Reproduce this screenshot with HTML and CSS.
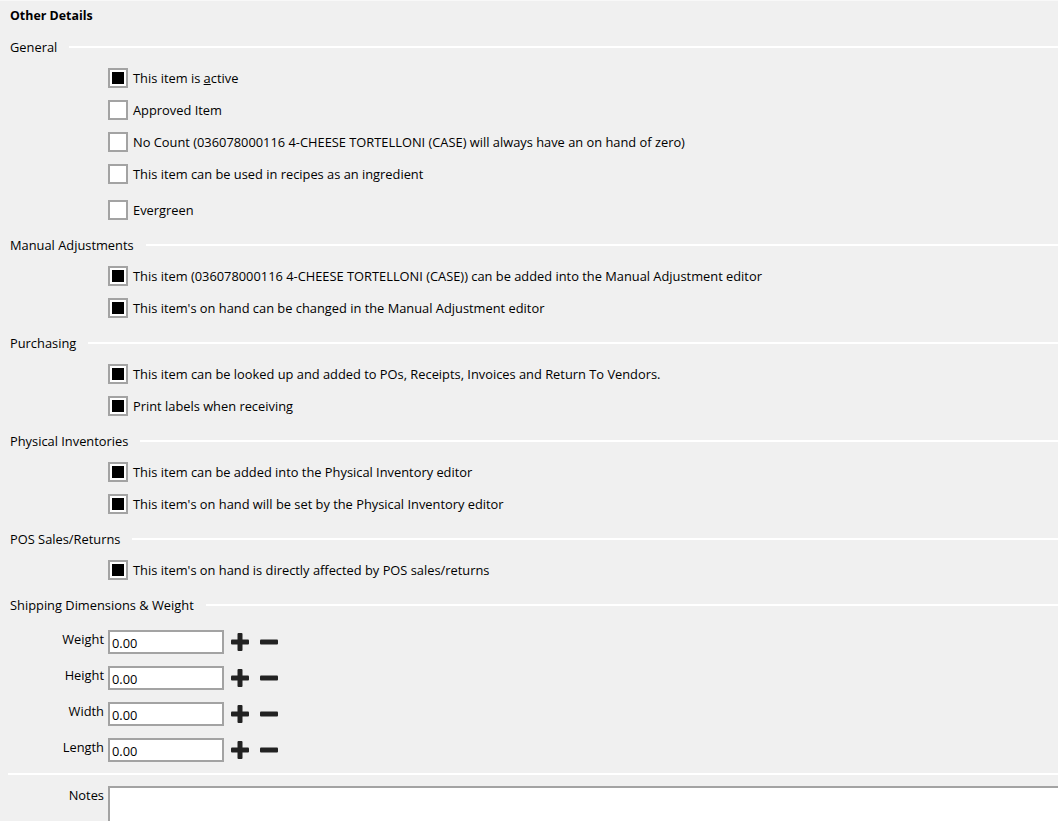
FILE: index.html
```html
<!DOCTYPE html>
<html>
<head>
<meta charset="utf-8">
<title>Other Details</title>
<link rel="stylesheet" href="styles.css">
</head>
<body>
<div class="page">
  <div class="title">Other Details</div>

  <section class="group">
    <div class="group-head"><span>General</span><span class="rule"></span></div>
    <div class="opt"><span class="cb on"></span><span>This item is <u>a</u>ctive</span></div>
    <div class="opt"><span class="cb"></span><span>Approved Item</span></div>
    <div class="opt"><span class="cb"></span><span>No Count (036078000116 4-CHEESE TORTELLONI (CASE) will always have an on hand of zero)</span></div>
    <div class="opt"><span class="cb"></span><span>This item can be used in recipes as an ingredient</span></div>
    <div class="opt opt-spaced"><span class="cb"></span><span>Evergreen</span></div>
  </section>

  <section class="group">
    <div class="group-head"><span>Manual Adjustments</span><span class="rule"></span></div>
    <div class="opt"><span class="cb on"></span><span>This item (036078000116 4-CHEESE TORTELLONI (CASE)) can be added into the Manual Adjustment editor</span></div>
    <div class="opt"><span class="cb on"></span><span>This item's on hand can be changed in the Manual Adjustment editor</span></div>
  </section>

  <section class="group">
    <div class="group-head"><span>Purchasing</span><span class="rule"></span></div>
    <div class="opt"><span class="cb on"></span><span>This item can be looked up and added to POs, Receipts, Invoices and Return To Vendors.</span></div>
    <div class="opt"><span class="cb on"></span><span>Print labels when receiving</span></div>
  </section>

  <section class="group">
    <div class="group-head"><span>Physical Inventories</span><span class="rule"></span></div>
    <div class="opt"><span class="cb on"></span><span>This item can be added into the Physical Inventory editor</span></div>
    <div class="opt"><span class="cb on"></span><span>This item's on hand will be set by the Physical Inventory editor</span></div>
  </section>

  <section class="group">
    <div class="group-head"><span>POS Sales/Returns</span><span class="rule"></span></div>
    <div class="opt"><span class="cb on"></span><span>This item's on hand is directly affected by POS sales/returns</span></div>
  </section>

  <section class="group">
    <div class="group-head"><span>Shipping Dimensions &amp; Weight</span><span class="rule"></span></div>
    <div class="fields">
      <div class="field">
        <label class="field-label">Weight</label>
        <input class="num" type="text" value="0.00">
        <svg class="btn-plus" width="18" height="18" viewBox="0 0 18 18"><rect x="0" y="6.5" width="18" height="5" rx="1" fill="#222"/><rect x="6.5" y="0" width="5" height="18" rx="1" fill="#222"/></svg>
        <svg class="btn-minus" width="18" height="18" viewBox="0 0 18 18"><rect x="0" y="6.5" width="18" height="5" rx="1" fill="#222"/></svg>
      </div>
      <div class="field">
        <label class="field-label">Height</label>
        <input class="num" type="text" value="0.00">
        <svg class="btn-plus" width="18" height="18" viewBox="0 0 18 18"><rect x="0" y="6.5" width="18" height="5" rx="1" fill="#222"/><rect x="6.5" y="0" width="5" height="18" rx="1" fill="#222"/></svg>
        <svg class="btn-minus" width="18" height="18" viewBox="0 0 18 18"><rect x="0" y="6.5" width="18" height="5" rx="1" fill="#222"/></svg>
      </div>
      <div class="field">
        <label class="field-label">Width</label>
        <input class="num" type="text" value="0.00">
        <svg class="btn-plus" width="18" height="18" viewBox="0 0 18 18"><rect x="0" y="6.5" width="18" height="5" rx="1" fill="#222"/><rect x="6.5" y="0" width="5" height="18" rx="1" fill="#222"/></svg>
        <svg class="btn-minus" width="18" height="18" viewBox="0 0 18 18"><rect x="0" y="6.5" width="18" height="5" rx="1" fill="#222"/></svg>
      </div>
      <div class="field">
        <label class="field-label">Length</label>
        <input class="num" type="text" value="0.00">
        <svg class="btn-plus" width="18" height="18" viewBox="0 0 18 18"><rect x="0" y="6.5" width="18" height="5" rx="1" fill="#222"/><rect x="6.5" y="0" width="5" height="18" rx="1" fill="#222"/></svg>
        <svg class="btn-minus" width="18" height="18" viewBox="0 0 18 18"><rect x="0" y="6.5" width="18" height="5" rx="1" fill="#222"/></svg>
      </div>
    </div>
  </section>

  <div class="sep"></div>

  <div class="notes">
    <label class="notes-label">Notes</label>
    <textarea class="notes-box"></textarea>
  </div>
</div>
</body>
</html>
```

FILE: styles.css
```css
html, body {
  margin: 0;
  padding: 0;
  background: #f0f0f0;
  overflow: hidden;
}

body {
  font-family: "Open Sans", "Noto Sans", sans-serif;
  font-size: 12.85px;
  color: #000;
}

.page {
  display: flex;
  flex-direction: column;
  gap: 4px;
  width: 1058px;
  box-shadow: inset 0 1px 0 #f8f8f8;
}

.title {
  padding: 4px 0 0 10px;
  height: 24px;
  line-height: 24px;
  font-size: 12.4px;
  font-weight: 700;
}

.group {
  display: flex;
  flex-direction: column;
}

.group-head {
  height: 30px;
  display: flex;
  align-items: center;
  gap: 12px;
  padding-left: 10px;
  white-space: nowrap;
}

.rule {
  flex: 1;
  height: 2px;
  background: #fff;
}

.opt {
  height: 32px;
  display: flex;
  align-items: center;
  gap: 5px;
  padding-left: 108px;
  white-space: nowrap;
}

.opt-spaced {
  margin-top: 4px;
}

.cb {
  flex: none;
  width: 20px;
  height: 20px;
  box-sizing: border-box;
  border: 2px solid #a3a3a3;
  background: #fff;
}

.cb.on {
  background: #000;
  box-shadow: inset 0 0 0 2px #fff;
}

.fields {
  display: flex;
  flex-direction: column;
  padding-top: 4px;
}

.field {
  height: 36px;
  display: flex;
  align-items: center;
}

.field-label {
  flex: none;
  align-self: flex-start;
  width: 104px;
  margin-right: 4px;
  padding-top: 7px;
  line-height: 16px;
  text-align: right;
}

.num {
  flex: none;
  width: 116px;
  height: 24px;
  box-sizing: border-box;
  margin: 0;
  padding: 2px 2px 0;
  border: 2px solid #a3a3a3;
  background: #fff;
  font-family: "Open Sans", "Noto Sans", sans-serif;
  font-size: 12.85px;
  color: #000;
  outline: none;
}

.btn-plus {
  flex: none;
  margin-left: 7px;
}

.btn-minus {
  flex: none;
  margin-left: 11px;
}

.sep {
  margin: 1px 0 0 8px;
  height: 2px;
  background: #fff;
}

.notes {
  display: flex;
  padding-top: 7px;
}

.notes-label {
  flex: none;
  width: 104px;
  margin-right: 4px;
  padding-top: 1px;
  line-height: 16px;
  text-align: right;
}

.notes-box {
  flex: none;
  width: 980px;
  height: 60px;
  box-sizing: border-box;
  margin: 0;
  border: 2px solid #a3a3a3;
  background: #fff;
  resize: none;
  outline: none;
}
```
